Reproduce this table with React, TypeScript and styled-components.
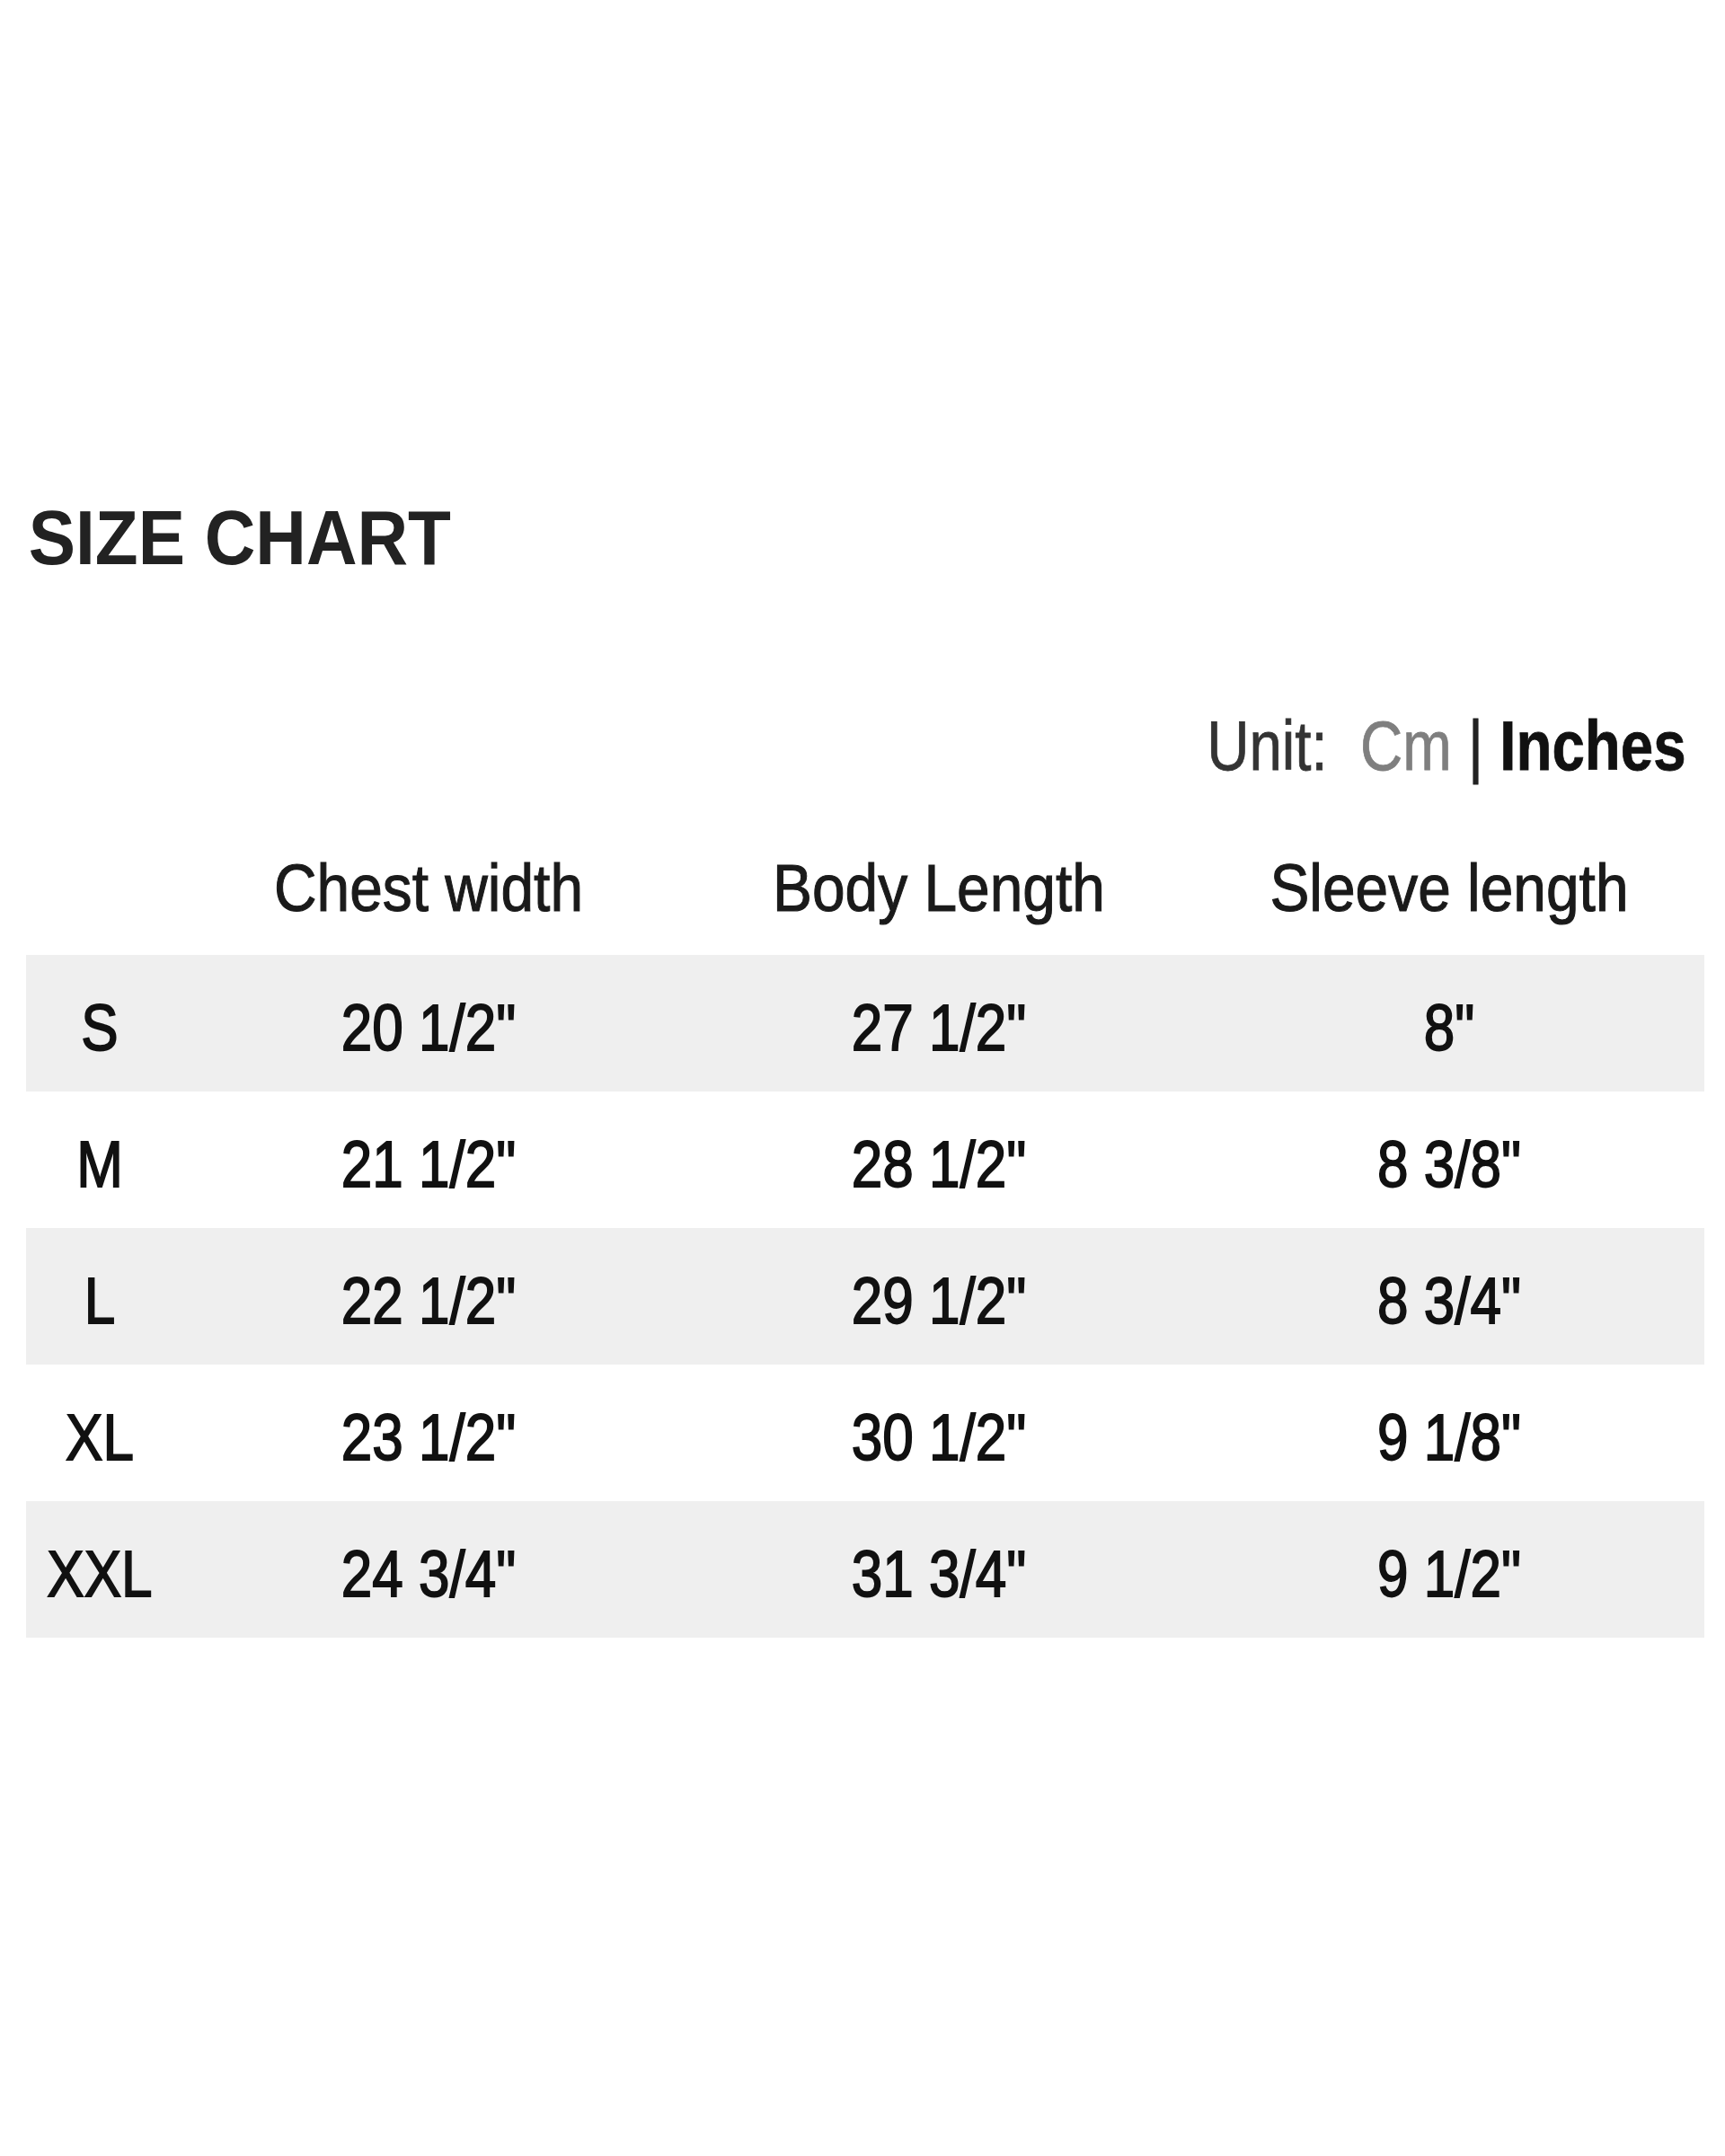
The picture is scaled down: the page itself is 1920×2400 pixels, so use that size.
import React from "react";
import styled, { createGlobalStyle } from "styled-components";

const GlobalStyle = createGlobalStyle`
  html, body {
    margin: 0;
    padding: 0;
    background: #ffffff;
  }
  body {
    font-family: "Liberation Sans", Arial, Helvetica, sans-serif;
  }
`;

const Page = styled.div`
  width: 1920px;
  min-height: 2400px;
  box-sizing: border-box;
  padding: 549px 23px 0 29px;
  background: #ffffff;
`;

const Title = styled.h1`
  margin: 0;
  padding-left: 3px;
  height: 100px;
  line-height: 100px;
  font-size: 85px;
  font-weight: 700;
  color: #222222;
  transform: scaleX(0.922);
  transform-origin: left center;
`;

const UnitBar = styled.div`
  margin-top: 131px;
  height: 100px;
  line-height: 100px;
  font-size: 77px;
  text-align: right;
  padding-right: 24px;
  white-space: pre;
  transform: scaleX(0.85);
  transform-origin: right center;
  -webkit-text-stroke: 0.8px currentColor;
`;

const UnitLabel = styled.span`
  color: #333333;
`;

const UnitOption = styled.span<{ $active?: boolean }>`
  color: ${(p) => (p.$active ? "#111111" : "#7f7f7f")};
  font-weight: ${(p) => (p.$active ? 700 : 400)};
`;

const Divider = styled.span`
  color: #222222;
`;

const Table = styled.div`
  margin-top: 40px;
  display: flex;
  flex-direction: column;
`;

const Row = styled.div<{ $shaded?: boolean; $header?: boolean }>`
  display: grid;
  grid-template-columns: 164px repeat(3, 1fr);
  align-items: center;
  height: ${(p) => (p.$header ? "143px" : "152px")};
  box-sizing: border-box;
  padding: ${(p) => (p.$header ? "0 0 6px 0" : "9px 0 0 0")};
  background: ${(p) => (p.$shaded ? "#efefef" : "transparent")};
`;

const HeadCell = styled.div`
  text-align: center;
  font-size: 74px;
  line-height: 1;
  color: #1a1a1a;
  white-space: nowrap;
  transform: scaleX(0.89);
  -webkit-text-stroke: 1.1px currentColor;
`;

const Cell = styled.div`
  text-align: center;
  font-size: 73px;
  line-height: 1;
  color: #111111;
  white-space: nowrap;
  transform: scaleX(0.85);
  -webkit-text-stroke: 1.8px currentColor;
`;

const rows = [
  { size: "S", chest: "20 1/2\"", body: "27 1/2\"", sleeve: "8\"" },
  { size: "M", chest: "21 1/2\"", body: "28 1/2\"", sleeve: "8 3/8\"" },
  { size: "L", chest: "22 1/2\"", body: "29 1/2\"", sleeve: "8 3/4\"" },
  { size: "XL", chest: "23 1/2\"", body: "30 1/2\"", sleeve: "9 1/8\"" },
  { size: "XXL", chest: "24 3/4\"", body: "31 3/4\"", sleeve: "9 1/2\"" },
];

export default function App() {
  return (
    <>
      <GlobalStyle />
      <Page>
        <Title>SIZE CHART</Title>
        <UnitBar>
          <UnitLabel>Unit:  </UnitLabel>
          <UnitOption>Cm</UnitOption>
          <Divider> | </Divider>
          <UnitOption $active>Inches</UnitOption>
        </UnitBar>
        <Table>
          <Row $header>
            <HeadCell />
            <HeadCell>Chest width</HeadCell>
            <HeadCell>Body Length</HeadCell>
            <HeadCell>Sleeve length</HeadCell>
          </Row>
          {rows.map((r, i) => (
            <Row key={r.size} $shaded={i % 2 === 0}>
              <Cell>{r.size}</Cell>
              <Cell>{r.chest}</Cell>
              <Cell>{r.body}</Cell>
              <Cell>{r.sleeve}</Cell>
            </Row>
          ))}
        </Table>
      </Page>
    </>
  );
}
